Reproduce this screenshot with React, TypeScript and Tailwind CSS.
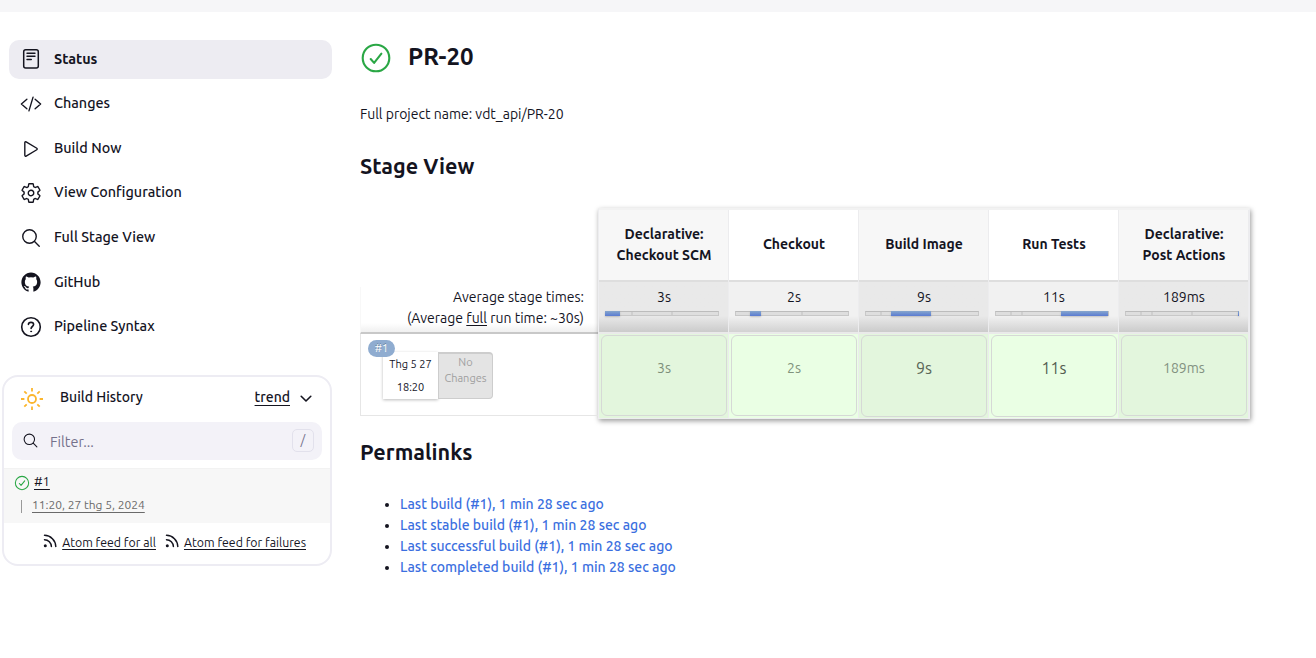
import React from 'react';
import {
  IoCodeSlashOutline,
  IoLogoGithub,
  IoPlayOutline,
  IoSearchOutline,
  IoSettingsOutline,
} from 'react-icons/io5';

function DocumentIcon() {
  return (
    <svg viewBox="0 0 22 22" className="-mt-px size-[22px]" fill="none" stroke="currentColor" strokeLinecap="round">
      <rect x="3.700" y="1.700" width="14.600" height="18.400" rx="2" strokeWidth="1.500" />
      <path d="M7 5.200h8M7 8.300h8M7 11.500h4.300" strokeWidth="1.400" />
    </svg>
  );
}

function HelpIcon() {
  return (
    <svg viewBox="0 0 22 22" className="size-[22px]" fill="none" stroke="currentColor" strokeWidth="1.600" strokeLinecap="round">
      <circle cx="11" cy="11" r="9.300" />
      <path d="M8.400 8.400c.1-1.300 1.200-2 2.600-2 1.500 0 2.600.9 2.600 2.200 0 1.900-2.500 1.900-2.500 3.800" />
      <circle cx="11.100" cy="15.400" r=".5" fill="currentColor" strokeWidth="1" />
    </svg>
  );
}

function CheckCircle({ className }: { className: string }) {
  return (
    <svg viewBox="0 0 32 32" className={className} fill="none" stroke="#2aa745" strokeWidth="2.100" strokeLinecap="round" strokeLinejoin="round">
      <circle cx="16" cy="16" r="13.300" />
      <path d="M10.700 17l3.400 3.900L21.400 11.700" />
    </svg>
  );
}

function SunIcon() {
  return (
    <svg viewBox="0 0 22 22" className="size-[22px]" fill="none" stroke="#fbb62e" strokeWidth="1.800">
      <circle cx="11" cy="11" r="4" />
      <path d="M11 0v3.400M11 18.600V22M0 11h3.400M18.600 11H22M3.300 3.300l2.400 2.400M16.300 16.300l2.400 2.400M3.300 18.700l2.400-2.400M16.300 5.700l2.400-2.400" />
    </svg>
  );
}

function FeedIcon() {
  return (
    <svg viewBox="0 0 14 14" className="-mt-[4px] shrink-0" width="14" height="14" fill="none" stroke="currentColor" strokeWidth="1.500" strokeLinecap="round">
      <path d="M1.500 1.300A11.500 11.500 0 0 1 12.800 12.600M1.500 5.700A7 7 0 0 1 8.400 12.600" />
      <circle cx="2.300" cy="11.800" r="1.500" fill="currentColor" stroke="none" />
    </svg>
  );
}

const tasks = [
  { label: 'Status', icon: <DocumentIcon />, text: 'font-semibold', active: true },
  { label: 'Changes', icon: <IoCodeSlashOutline size={22} />, text: 'font-medium' },
  { label: 'Build Now', icon: <IoPlayOutline size={22} />, text: 'font-medium' },
  { label: 'View Configuration', icon: <IoSettingsOutline size={22} />, text: 'font-medium' },
  { label: 'Full Stage View', icon: <IoSearchOutline size={22} />, text: 'font-medium' },
  { label: 'GitHub', icon: <IoLogoGithub size={22} />, text: 'font-medium' },
  { label: 'Pipeline Syntax', icon: <HelpIcon />, text: 'font-medium' },
];

function Sidebar() {
  return (
    <aside className="w-[334px] shrink-0 pt-7">
      <nav className="ml-[9px] flex w-[323px] flex-col gap-[5.600px]">
        {tasks.map((t) => (
          <a key={t.label} className={`flex h-[39px] items-center rounded-[10px] pl-[11px] text-[14.400px] ${t.active ? 'bg-[#edecf2]' : ''}`}>
            <span className="flex size-[22px] items-center justify-center">{t.icon}</span>
            <span className={`ml-3 whitespace-nowrap pb-[0.800px] leading-[21px] ${t.text}`}>{t.label}</span>
          </a>
        ))}
      </nav>

      <section className="ml-0.5 mt-[28px] h-[191px] w-[330px] overflow-hidden rounded-[16px] border-2 border-[#edecf3]">
        <div className="flex h-[45px] items-center pl-[17px] pr-[18px]">
          <span className="-mt-px"><SunIcon /></span>
          <span className="ml-[17px] grow pb-1 font-medium">Build History</span>
          <span className="mr-2.5 pb-1 font-medium underline underline-offset-[3px]">trend</span>
          <svg viewBox="0 0 12 12" width="12" height="12" fill="none" stroke="currentColor" strokeWidth="1.600" strokeLinecap="round" strokeLinejoin="round">
            <path d="M1.200 3.300L6 8l4.800-4.700" />
          </svg>
        </div>
        <div className="mx-2 flex h-[38px] items-center rounded-[10px] bg-[#f3f2f8] pl-2.5 pr-2">
          <IoSearchOutline size={17} />
          <span className="ml-[11px] grow pt-0.5 text-[14.400px] font-[450] leading-[20px] text-[#74718c]">Filter...</span>
          <span className="flex h-[23px] w-[22px] items-center justify-center rounded-[5px] border border-[#e2e1ec] text-[13px] text-[#74718c]">/</span>
        </div>
        <div className="mt-2 h-[55px] border-t border-[#f2f2f2] bg-[#f7f7f7] pl-2.5 pt-[3px]">
          <div className="flex h-[22px] items-center">
            <CheckCircle className="size-4" />
            <span className="ml-1 pb-0.5 text-[13px] underline underline-offset-[3px]">#1</span>
          </div>
          <div className="flex h-[22px] items-center pl-[7px] text-[12px] text-[#6a6a6a]">
            <span className="mt-1 h-[13px] w-px bg-[#999]" />
            <span className="ml-2.5 underline underline-offset-[3px]">11:20, 27 thg 5, 2024</span>
          </div>
        </div>
        <div className="flex h-[40px] items-center justify-end pr-6 text-[12.300px]">
          <FeedIcon />
          <span className="ml-[5px] pt-px underline underline-offset-2">Atom feed for all</span>
          <span className="ml-[9px] flex items-center">
            <FeedIcon />
            <span className="ml-[5px] pt-px underline underline-offset-2">Atom feed for failures</span>
          </span>
        </div>
      </section>
    </aside>
  );
}

type Stage = { name: string[]; time: string; from: number; width: number; ticks: number[]; strong?: boolean };

const stages: Stage[] = [
  { name: ['Declarative:', 'Checkout SCM'], time: '3s', from: 0, width: 15, ticks: [25, 65] },
  { name: ['Checkout'], time: '2s', from: 15, width: 11, ticks: [65] },
  { name: ['Build Image'], time: '9s', from: 26, width: 40, ticks: [14], strong: true },
  { name: ['Run Tests'], time: '11s', from: 66, width: 47, ticks: [14, 25], strong: true },
  { name: ['Declarative:', 'Post Actions'], time: '189ms', from: 113, width: 1, ticks: [14, 25, 65] },
];

const cellText = ['text-[14px] text-[#7d8f7b]', 'text-[14px] text-[#80937c]', 'text-[16px] text-[#5b6859]', 'text-[16px] text-[#556052]', 'text-[14px] text-[#829180]'];

function StageColumn({ stage, index }: { stage: Stage; index: number }) {
  const odd = index % 2 === 0;
  return (
    <div className="w-[130px] border-r border-[#ececee]">
      <div className={`flex h-[70px] flex-col items-center justify-center pb-px pl-px text-[14px] font-semibold leading-[21px] ${odd ? 'bg-[#f7f7f7]' : 'bg-white'}`}>
        {stage.name.map((line) => <span key={line} className="whitespace-nowrap">{line}</span>)}
      </div>
      <div className={`h-[52px] border-t-2 border-[#dedede] bg-linear-to-b pt-[5px] text-center ${odd ? 'from-[#e9e9e9] from-68% to-[#cbcbcb]' : 'from-[#f1f1f1] from-68% to-[#d2d2d2]'}`}>
        <div className="pl-px leading-[21px]">{stage.time}</div>
        <div className="relative ml-1.5 mt-[3px] h-[5px] w-[114px] border border-[#c8c8c8] border-t-[#bcbcbc] bg-[#dedede]">
          {stage.ticks.map((x) => <span key={x} className="absolute inset-y-0 w-0.5 bg-[#cfcfcf]" style={{ left: x }} />)}
          <span className="absolute -inset-y-px bg-linear-to-b from-[#87a6cc] to-[#5b7bd2] shadow-[0_1px_2px_#0003]" style={{ left: stage.from - 1, width: stage.width }} />
        </div>
      </div>
      <div className={`h-[86px] border-t-2 border-[#eaeaea] pb-px pl-0.5 pr-px pt-px ${odd ? 'bg-[#e3f6dd]' : 'bg-[#eaffe4]'}`}>
        <div className={`flex justify-center rounded-[6px] border border-[#d6d9d6] pt-[22px] leading-[21px] ${stage.strong ? 'h-[82px]' : 'h-[81px]'} ${cellText[index]}`}>{stage.time}</div>
      </div>
    </div>
  );
}

function StageView() {
  return (
    <div className="mt-[28px] flex h-[212px] w-[892px]">
      <div className="flex w-[238px] flex-col pt-[79px]">
        <div className="h-[47px] border-b-2 border-l border-b-[#c8c8c8] border-l-[#f8f8f8] bg-linear-to-b from-white from-80% to-[#f0f0f0] pr-3.5 text-right leading-[21px]">
          <div>Average stage times:</div>
          <div>(Average <u className="underline-offset-2">full</u> run time: ~30s)</div>
        </div>
        <div className="relative h-[82px] border-b border-l border-[#e6e6e6]">
          <div className="absolute left-[22px] top-[18px] flex h-[47px] text-center">
            <div className="w-[55px] bg-white pt-px text-[11px] leading-[23px] shadow-[0_1px_3px_#0004]">
              <div>Thg 5 27</div>
              <div>18:20</div>
            </div>
            <div className="h-[47px] w-[55px] rounded-r-[4px] border border-t-2 border-[#cdcdcd] bg-[#e4e4e4] text-[11px] leading-4 text-[#a0a0a0]">
              <div>No</div>
              <div>Changes</div>
            </div>
          </div>
          <span className="absolute left-[7px] top-[6px] flex h-[17px] w-[27px] items-center justify-center rounded-full bg-[#8facd0] text-[11px] text-white [text-shadow:0_-1px_0_#0004]">#1</span>
        </div>
      </div>
      <div className="flex h-[211px] w-[652px] border border-t-2 border-[#ededf0] border-t-[#f2f2f2] shadow-[1px_2px_5px_#0006]">
        {stages.map((s, i) => <StageColumn key={i} stage={s} index={i} />)}
      </div>
    </div>
  );
}

const permalinks = ['Last build (#1), 1 min 28 sec ago', 'Last stable build (#1), 1 min 28 sec ago', 'Last successful build (#1), 1 min 28 sec ago', 'Last completed build (#1), 1 min 28 sec ago'];

export default function App() {
  return (
    <div className="h-[658px] overflow-hidden bg-white font-['Ubuntu','Noto_Sans',sans-serif] text-[14px] text-[#14141f]">
      <div className="h-3 bg-[#f6f6f8]" />
      <div className="flex">
        <Sidebar />
        <main className="w-[956px] pl-[26px] pt-[30px]">
          <div className="flex h-8 items-center">
            <CheckCircle className="size-8" />
            <h1 className="ml-4 pb-0.5 text-[24px] font-semibold">PR-20</h1>
          </div>
          <p className="mt-[30px] leading-[21px]">Full project name: vdt_api/PR-20</p>
          <h2 className="mt-[27px] text-[21.600px] font-semibold leading-[28px]">Stage View</h2>
          <StageView />
          <h2 className="mt-[18px] text-[21.600px] font-semibold leading-[28px]">Permalinks</h2>
          <ul className="mt-[28px] list-disc pl-10 font-medium leading-[21px] text-[#14141f]">
            {permalinks.map((p) => <li key={p}><a className="text-[#3b6fe0]">{p}</a></li>)}
          </ul>
        </main>
      </div>
    </div>
  );
}
